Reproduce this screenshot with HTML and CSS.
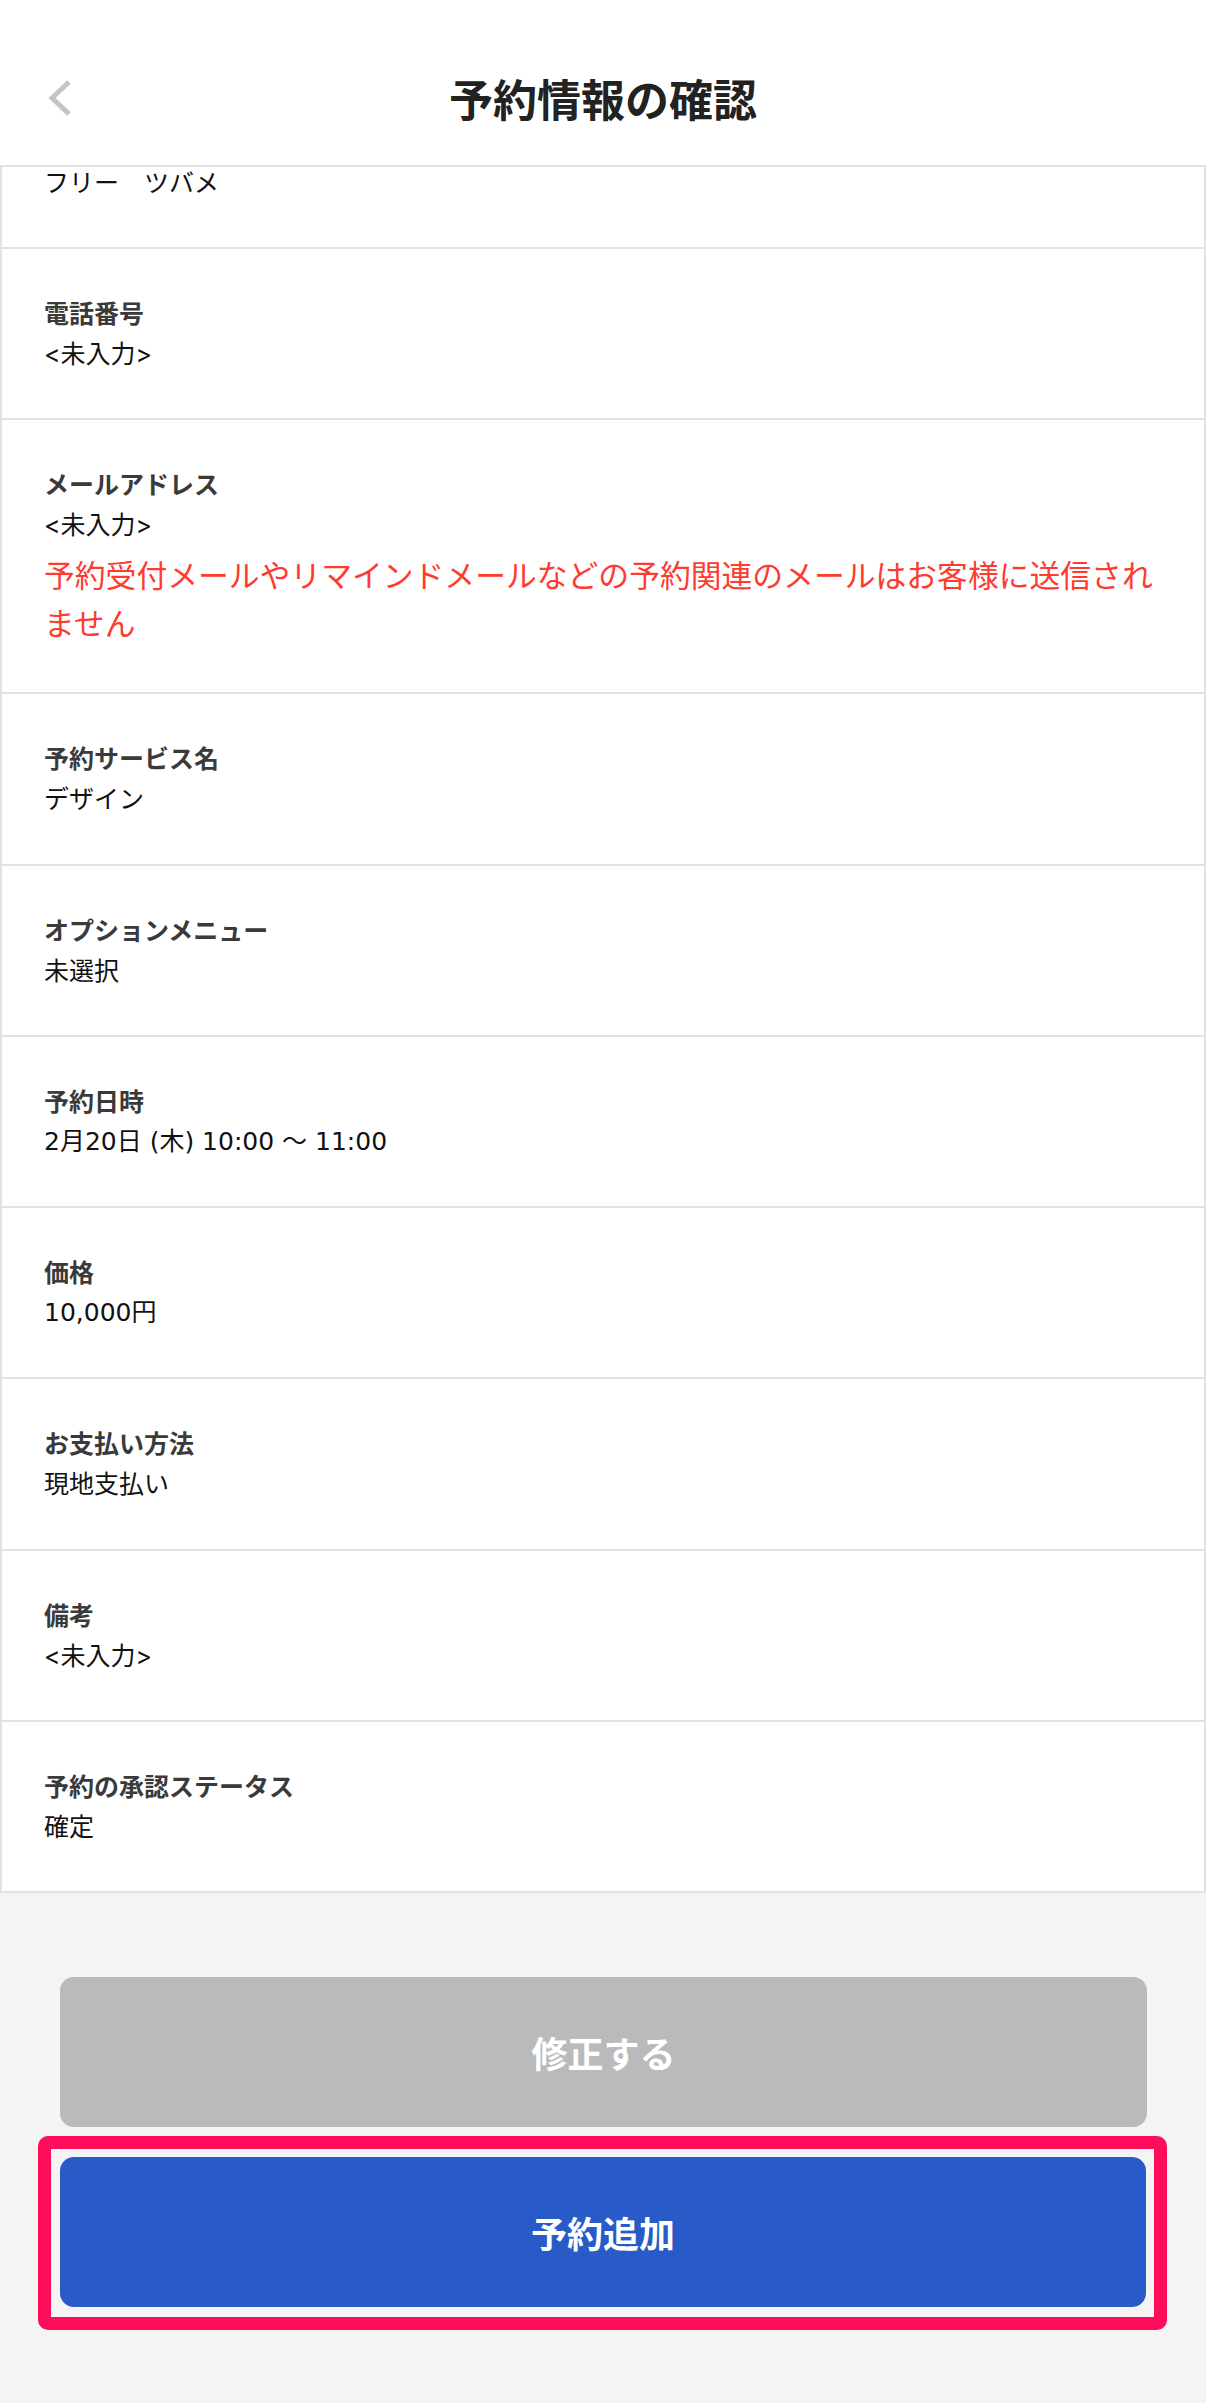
FILE: index.html
```html
<!DOCTYPE html>
<html lang="ja">
<head>
<meta charset="utf-8">
<title>予約情報の確認</title>
<link rel="stylesheet" href="styles.css">
</head>
<body>
<header class="nav">
  <button class="back" aria-label="戻る">
    <svg class="back-icon" viewBox="0 0 28 40" width="28" height="40"><polyline points="23,4 6,20 23,36" fill="none" stroke="#c4c4c4" stroke-width="5"/></svg>
  </button>
  <h1 class="title">予約情報の確認</h1>
  <span class="nav-spacer"></span>
</header>
<main class="card">
  <div class="row row-partial"><p class="value">フリー　ツバメ</p></div>
  <div class="row"><p class="label">電話番号</p><p class="value">&lt;未入力&gt;</p></div>
  <div class="row row-mail"><p class="label">メールアドレス</p><p class="value">&lt;未入力&gt;</p><p class="note">予約受付メールやリマインドメールなどの予約関連のメールはお客様に送信されません</p></div>
  <div class="row"><p class="label">予約サービス名</p><p class="value">デザイン</p></div>
  <div class="row"><p class="label">オプションメニュー</p><p class="value">未選択</p></div>
  <div class="row"><p class="label">予約日時</p><p class="value num">2月20日 (木) 10:00 〜 11:00</p></div>
  <div class="row"><p class="label">価格</p><p class="value num">10,000円</p></div>
  <div class="row"><p class="label">お支払い方法</p><p class="value">現地支払い</p></div>
  <div class="row"><p class="label">備考</p><p class="value">&lt;未入力&gt;</p></div>
  <div class="row"><p class="label">予約の承認ステータス</p><p class="value">確定</p></div>
</main>
<div class="actions">
  <button class="btn btn-edit">修正する</button>
  <div class="highlight"><button class="btn btn-add">予約追加</button></div>
</div>
</body>
</html>
```

FILE: styles.css
```css
body {
  margin: 0;
  background: #f5f4f5;
  font-family: Inter, "Noto Sans CJK JP", sans-serif;
}

.nav {
  height: 167px;
  box-sizing: border-box;
  padding-top: 31px;
  background: #fff;
  border-bottom: 2px solid #e2e2e2;
  display: grid;
  grid-template-columns: 1fr auto 1fr;
  align-items: center;
}

.back {
  justify-self: start;
  margin-left: 46px;
  padding: 0;
  border: 0;
  background: none;
  width: 28px;
  height: 40px;
}

.back-icon {
  display: block;
}

.title {
  margin: 0;
  font-family: "Noto Sans CJK JP", sans-serif;
  font-size: 44px;
  font-weight: 700;
  line-height: 1;
  color: #222;
}

.card {
  background: #fff;
  border-left: 2px solid #e2e2e2;
  border-right: 2px solid #e2e2e2;
}

.row {
  border-bottom: 2px solid #e2e2e2;
  padding: 42px 30px 43.3px 42px;
}

.row p {
  margin: 0;
  font-size: 25px;
  line-height: 42px;
}

.label {
  font-family: "Noto Sans CJK JP", sans-serif;
  font-weight: 700;
  color: #3a3a3a;
}

.value {
  color: #111;
}

.row .num {
  font-family: "DejaVu Sans", "Noto Sans CJK JP", sans-serif;
}

.row-partial {
  padding-top: 0;
  padding-bottom: 48px;
}

.row.row-partial .value {
  line-height: 32px;
}

.row-mail {
  padding-bottom: 46px;
}

.row .note {
  margin-top: 4px;
  font-family: "Noto Sans CJK JP", sans-serif;
  font-size: 30.8px;
  line-height: 48px;
  color: #ff3b30;
}

.actions {
  padding-top: 84px;
  display: flex;
  flex-direction: column;
}

.btn {
  display: block;
  width: 100%;
  height: 150px;
  border: 0;
  border-radius: 14px;
  color: #fff;
  font-family: "Noto Sans CJK JP", sans-serif;
  font-size: 36px;
  font-weight: 700;
}

.btn-edit {
  width: 1087px;
  margin-left: 60px;
  background: #bababc;
}

.highlight {
  box-sizing: border-box;
  width: 1129px;
  margin: 9px 0 0 38px;
  padding: 8px 8px 10px 9px;
  border: 13px solid #ff0d5a;
  border-radius: 10px;
}

.btn-add {
  background: #295bc8;
}
```
